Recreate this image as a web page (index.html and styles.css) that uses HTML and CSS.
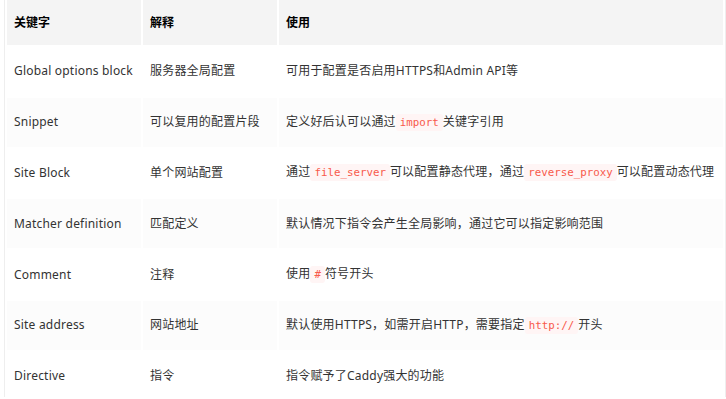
FILE: index.html
```html
<!DOCTYPE html>
<html lang="zh-CN">
<head>
<meta charset="utf-8">
<link rel="stylesheet" href="styles.css">
</head>
<body>
<div class="wrap">
<table class="tbl">
<colgroup><col class="c1"><col class="c2"><col class="c3"></colgroup>
<thead>
<tr><th>关键字</th><th>解释</th><th>使用</th></tr>
</thead>
<tbody>
<tr><td>Global options block</td><td>服务器全局配置</td><td>可用于配置是否启用HTTPS和Admin API等</td></tr>
<tr><td>Snippet</td><td>可以复用的配置片段</td><td>定义好后认可以通过<code>import</code>关键字引用</td></tr>
<tr><td>Site Block</td><td>单个网站配置</td><td>通过<code>file_server</code>可以配置静态代理，通过<code>reverse_proxy</code>可以配置动态代理</td></tr>
<tr><td>Matcher definition</td><td>匹配定义</td><td>默认情况下指令会产生全局影响，通过它可以指定影响范围</td></tr>
<tr><td>Comment</td><td>注释</td><td>使用<code>#</code>符号开头</td></tr>
<tr><td>Site address</td><td>网站地址</td><td>默认使用HTTPS，如需开启HTTP，需要指定<code>http://</code>开头</td></tr>
<tr><td>Directive</td><td>指令</td><td>指令赋予了Caddy强大的功能</td></tr>
</tbody>
</table>
</div>
</body>
</html>
```

FILE: styles.css
```css
html, body {
  margin: 0;
  padding: 0;
  background: #fff;
}
body {
  font-family: "Noto Sans", "Noto Sans CJK SC", sans-serif;
  font-size: 12px;
  color: #333;
  overflow: hidden;
}
.wrap {
  margin-left: 4px;
  width: 720px;
  height: 399px;
  border-left: 1px solid #eee;
  border-right: 1px solid #eee;
}
.tbl {
  border-collapse: separate;
  border-spacing: 2px;
  margin-top: -2px;
  table-layout: fixed;
  width: 720px;
}
.c1 { width: 134px; }
.c2 { width: 134px; }
.c3 { width: 444px; }
.tbl th {
  background: #f4f4f4;
  color: #000;
  font-weight: bold;
  text-align: left;
  height: 45px;
  box-sizing: border-box;
  padding: 0 7px;
  line-height: 20px;
}
.tbl td {
  height: 48.8px;
  box-sizing: border-box;
  padding: 0 7px;
  line-height: 20px;
  white-space: nowrap;
  letter-spacing: 0.2px;
}
.tbl tbody tr:nth-child(even) td {
  background: #fcfcfc;
}
code {
  font-family: "DejaVu Sans Mono", "Liberation Mono", monospace;
  font-size: 10.8px;
  letter-spacing: 0;
  color: #f85a4c;
  background: #fff5f5;
  padding: 2px 4px;
  border-radius: 3px;
}
```
